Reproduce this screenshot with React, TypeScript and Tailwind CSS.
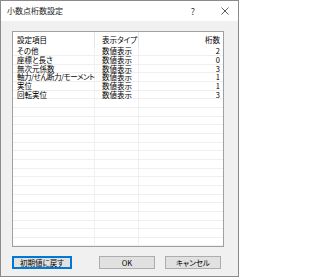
import React from 'react';

const rows = [
  { name: 'その他', type: '数値表示', digits: '2' },
  { name: '座標と長さ', type: '数値表示', digits: '0' },
  { name: '無次元係数', type: '数値表示', digits: '3' },
  { name: '軸力/せん断力/モーメント', type: '数値表示', digits: '1', tight: true },
  { name: '実位', type: '数値表示', digits: '1' },
  { name: '回転実位', type: '数値表示', digits: '3' },
];

// empty grid rows below the data, like a Windows list view with grid lines
const TOTAL_ROWS = 23;

const font = { fontFamily: '"Noto Sans CJK JP", "Noto Sans", sans-serif' };

const App: React.FC = () => {
  const filled = [...rows, ...Array.from({ length: TOTAL_ROWS - rows.length }, () => null)];

  return (
    <div className="w-[239px] h-[277px] border border-[#8a8a8a] flex flex-col bg-white text-black text-[7.5px] leading-none [font-feature-settings:'palt']" style={font}>
      {/* Title bar */}
      <div className="h-[20px] flex items-center bg-white pl-[6px]">
        <span className="text-[#222] text-[8px]">小数点桁数設定</span>
        <span className="ml-auto mr-[26px] text-[9px] text-[#333]">?</span>
        <svg width="8" height="8" viewBox="0 0 8 8" className="mr-[9px]">
          <path d="M0.5 0.5 L7.5 7.5 M7.5 0.5 L0.5 7.5" stroke="#333" strokeWidth="0.8" />
        </svg>
      </div>

      {/* Body */}
      <div className="flex-1 bg-[#f0f0f0] pt-[10px] pl-[11px] pr-[14px] pb-[7px] flex flex-col">
        <div className="h-[216px] border border-[#a0a0a0] bg-white overflow-hidden flex flex-col">
          {/* Header */}
          <div className="h-[15.4px] flex shrink-0">
            <div className="w-[82px] pl-[4px] flex items-center border-r border-[#e5e5e5] whitespace-nowrap">設定項目</div>
            <div className="w-[44px] pl-[7px] flex items-center border-r border-[#e5e5e5] whitespace-nowrap">表示タイプ</div>
            <div className="flex-1 pr-[3px] flex items-center justify-end">桁数</div>
          </div>
          {filled.map((r, i) => (
            <div key={i} className="h-[8.66px] flex shrink-0 border-b border-[#efefef]">
              <div className={`w-[82px] pl-[4px] flex items-center border-r border-[#efefef] whitespace-nowrap ${r?.tight ? 'tracking-[-0.45px]' : ''}`}>{r?.name}</div>
              <div className="w-[44px] pl-[7px] flex items-center border-r border-[#efefef] whitespace-nowrap">{r?.type}</div>
              <div className="flex-1 pr-[3px] flex items-center justify-end">{r?.digits}</div>
            </div>
          ))}
        </div>

        {/* Buttons */}
        <div className="mt-[9px] flex pr-[3px]">
          <button className="w-[60px] h-[13px] bg-[#e1e1e1] border-2 border-[#0078d7] flex items-center justify-center whitespace-nowrap">初期値に戻す</button>
          <button className="ml-auto w-[56px] h-[13px] bg-[#e1e1e1] border border-[#adadad] flex items-center justify-center">OK</button>
          <button className="ml-[10px] w-[56px] h-[13px] bg-[#e1e1e1] border border-[#adadad] flex items-center justify-center whitespace-nowrap">キャンセル</button>
        </div>
      </div>
    </div>
  );
};

export default App;
